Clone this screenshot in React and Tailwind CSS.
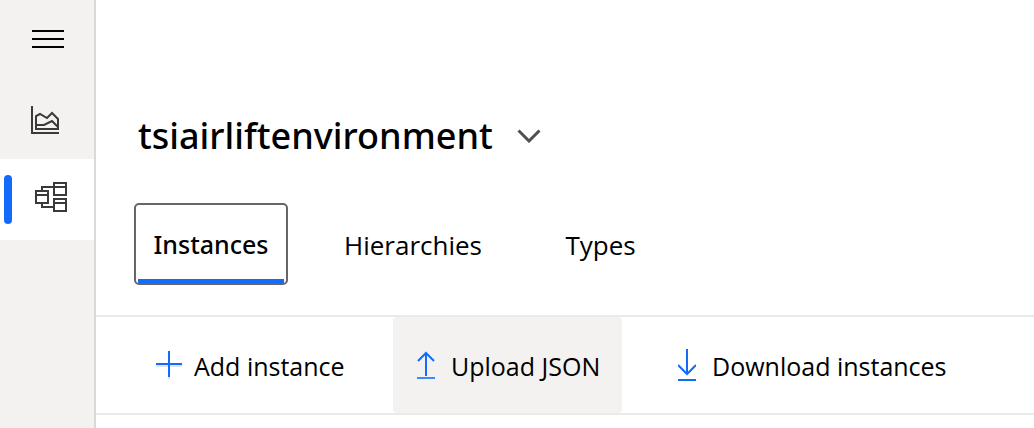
const navItem = 'flex w-full items-center justify-center';
const tab = 'flex h-[82px] items-center justify-center rounded-[5px] pt-0.5 text-[26px]';
const command = 'flex h-24 items-center rounded-[4px] text-[25px] whitespace-nowrap';

function MenuIcon() {
  return (
    <svg width="32" height="18" viewBox="0 0 32 18" fill="#000" aria-hidden="true">
      <path d="M0 0h32v2H0zM0 8h32v2H0zM0 16h32v2H0z" />
    </svg>
  );
}

function ChartIcon() {
  return (
    <svg width="28" height="28" viewBox="0 0 28 28" fill="none" stroke="#3b3a39" strokeWidth="2" aria-hidden="true">
      <path d="M1 0v27h27" />
      <path d="M5 23V10l4-2 7 4 5-5 6 6v10z" />
      <path d="M5 19h8l8-4 6 6" />
    </svg>
  );
}

function ModelIcon() {
  return (
    <svg width="32" height="30" viewBox="0 0 32 30" fill="none" stroke="#3b3a39" strokeWidth="2" className="block" aria-hidden="true">
      <path d="M1 9h12v12H1zM1 13h12M19 1h12v12H19zM19 5h12M19 17h12v12H19zM19 21h12M7 9V5h12M7 21v4h12" />
    </svg>
  );
}

function Sidebar() {
  return (
    <nav aria-label="Main" className="flex w-24 shrink-0 flex-col border-r-2 border-[#d9d9d9] bg-[#f3f2f1]">
      <button aria-label="Menu" className={`${navItem} h-[78px] pl-0.5`}><MenuIcon /></button>
      <button aria-label="Analytics" className={`${navItem} h-[81px] pt-0.5 pr-1`}><ChartIcon /></button>
      <button aria-label="Model" aria-current="page" className="flex h-[81px] w-full items-center bg-white pl-1">
        <span className="h-[49px] w-2 rounded-full bg-[#136bfb]" />
        <span className="pb-1.5 pl-[23px]"><ModelIcon /></span>
      </button>
    </nav>
  );
}

export default function App() {
  return (
    <div className="flex min-h-screen bg-white font-['Open_Sans','Noto_Sans',sans-serif] text-black">
      <Sidebar />
      <main className="min-w-0 flex-1">
        <header className="flex items-center gap-6 pt-[110px] pl-[42px]">
          <h1 className="font-['Noto_Sans',sans-serif] text-[36px] leading-[52px] font-medium">tsiairliftenvironment</h1>
          <button aria-label="Switch environment">
            <svg width="24" height="14" viewBox="0 0 24 14" fill="none" stroke="#505050" strokeWidth="3" aria-hidden="true">
              <path d="M1.5 1.5 12 12 22.5 1.5" />
            </svg>
          </button>
        </header>
        <div role="tablist" className="mt-[41px] flex gap-[37px] pl-[38px]">
          <button role="tab" aria-selected="true" className="flex h-[82px] w-[154px] flex-col rounded-[5px] border-2 border-[#666] px-0.5 font-['Noto_Sans',sans-serif] text-[25px] font-medium">
            <span className="flex w-full flex-1 items-center justify-center pt-1.5">Instances</span>
            <span className="h-1 w-full bg-[#136bfb]" />
          </button>
          <button role="tab" aria-selected="false" className={`${tab} w-[176px]`}>Hierarchies</button>
          <button role="tab" aria-selected="false" className={`${tab} w-[125px]`}>Types</button>
        </div>
        <div role="toolbar" aria-label="Instance actions" className="mt-[30px] flex border-y-2 border-[#eaeaea]">
          <button className={`${command} ml-10 w-[257px] gap-3 pl-5`}>
            <svg width="26" height="32" viewBox="0 0 26 32" fill="none" aria-hidden="true">
              <path d="M0 17h26M13 3v27" stroke="#e4e4e4" strokeWidth="2" />
              <path d="M0 15h26M13 2v26" stroke="#136bfb" strokeWidth="2" />
            </svg>
            <span className="pt-1">Add instance</span>
          </button>
          <button className={`${command} w-[229px] gap-4 bg-[#f3f2f1] pl-6`}>
            <svg width="18" height="32" viewBox="0 0 18 32" fill="none" stroke="#136bfb" strokeWidth="2" aria-hidden="true">
              <path d="M9 27V4M1 12l8-8 8 8" />
              <path d="M0 29h18" stroke="#3f88ff" />
            </svg>
            <span className="pt-1">Upload JSON</span>
          </button>
          <button className={`${command} ml-8 gap-4 px-6`}>
            <svg width="18" height="32" viewBox="0 0 18 32" fill="none" stroke="#136bfb" strokeWidth="2" aria-hidden="true">
              <path d="M9 0v25M0 16l9 9 9-9M0 31h18" />
            </svg>
            <span className="pt-1">Download instances</span>
          </button>
        </div>
      </main>
    </div>
  );
}
